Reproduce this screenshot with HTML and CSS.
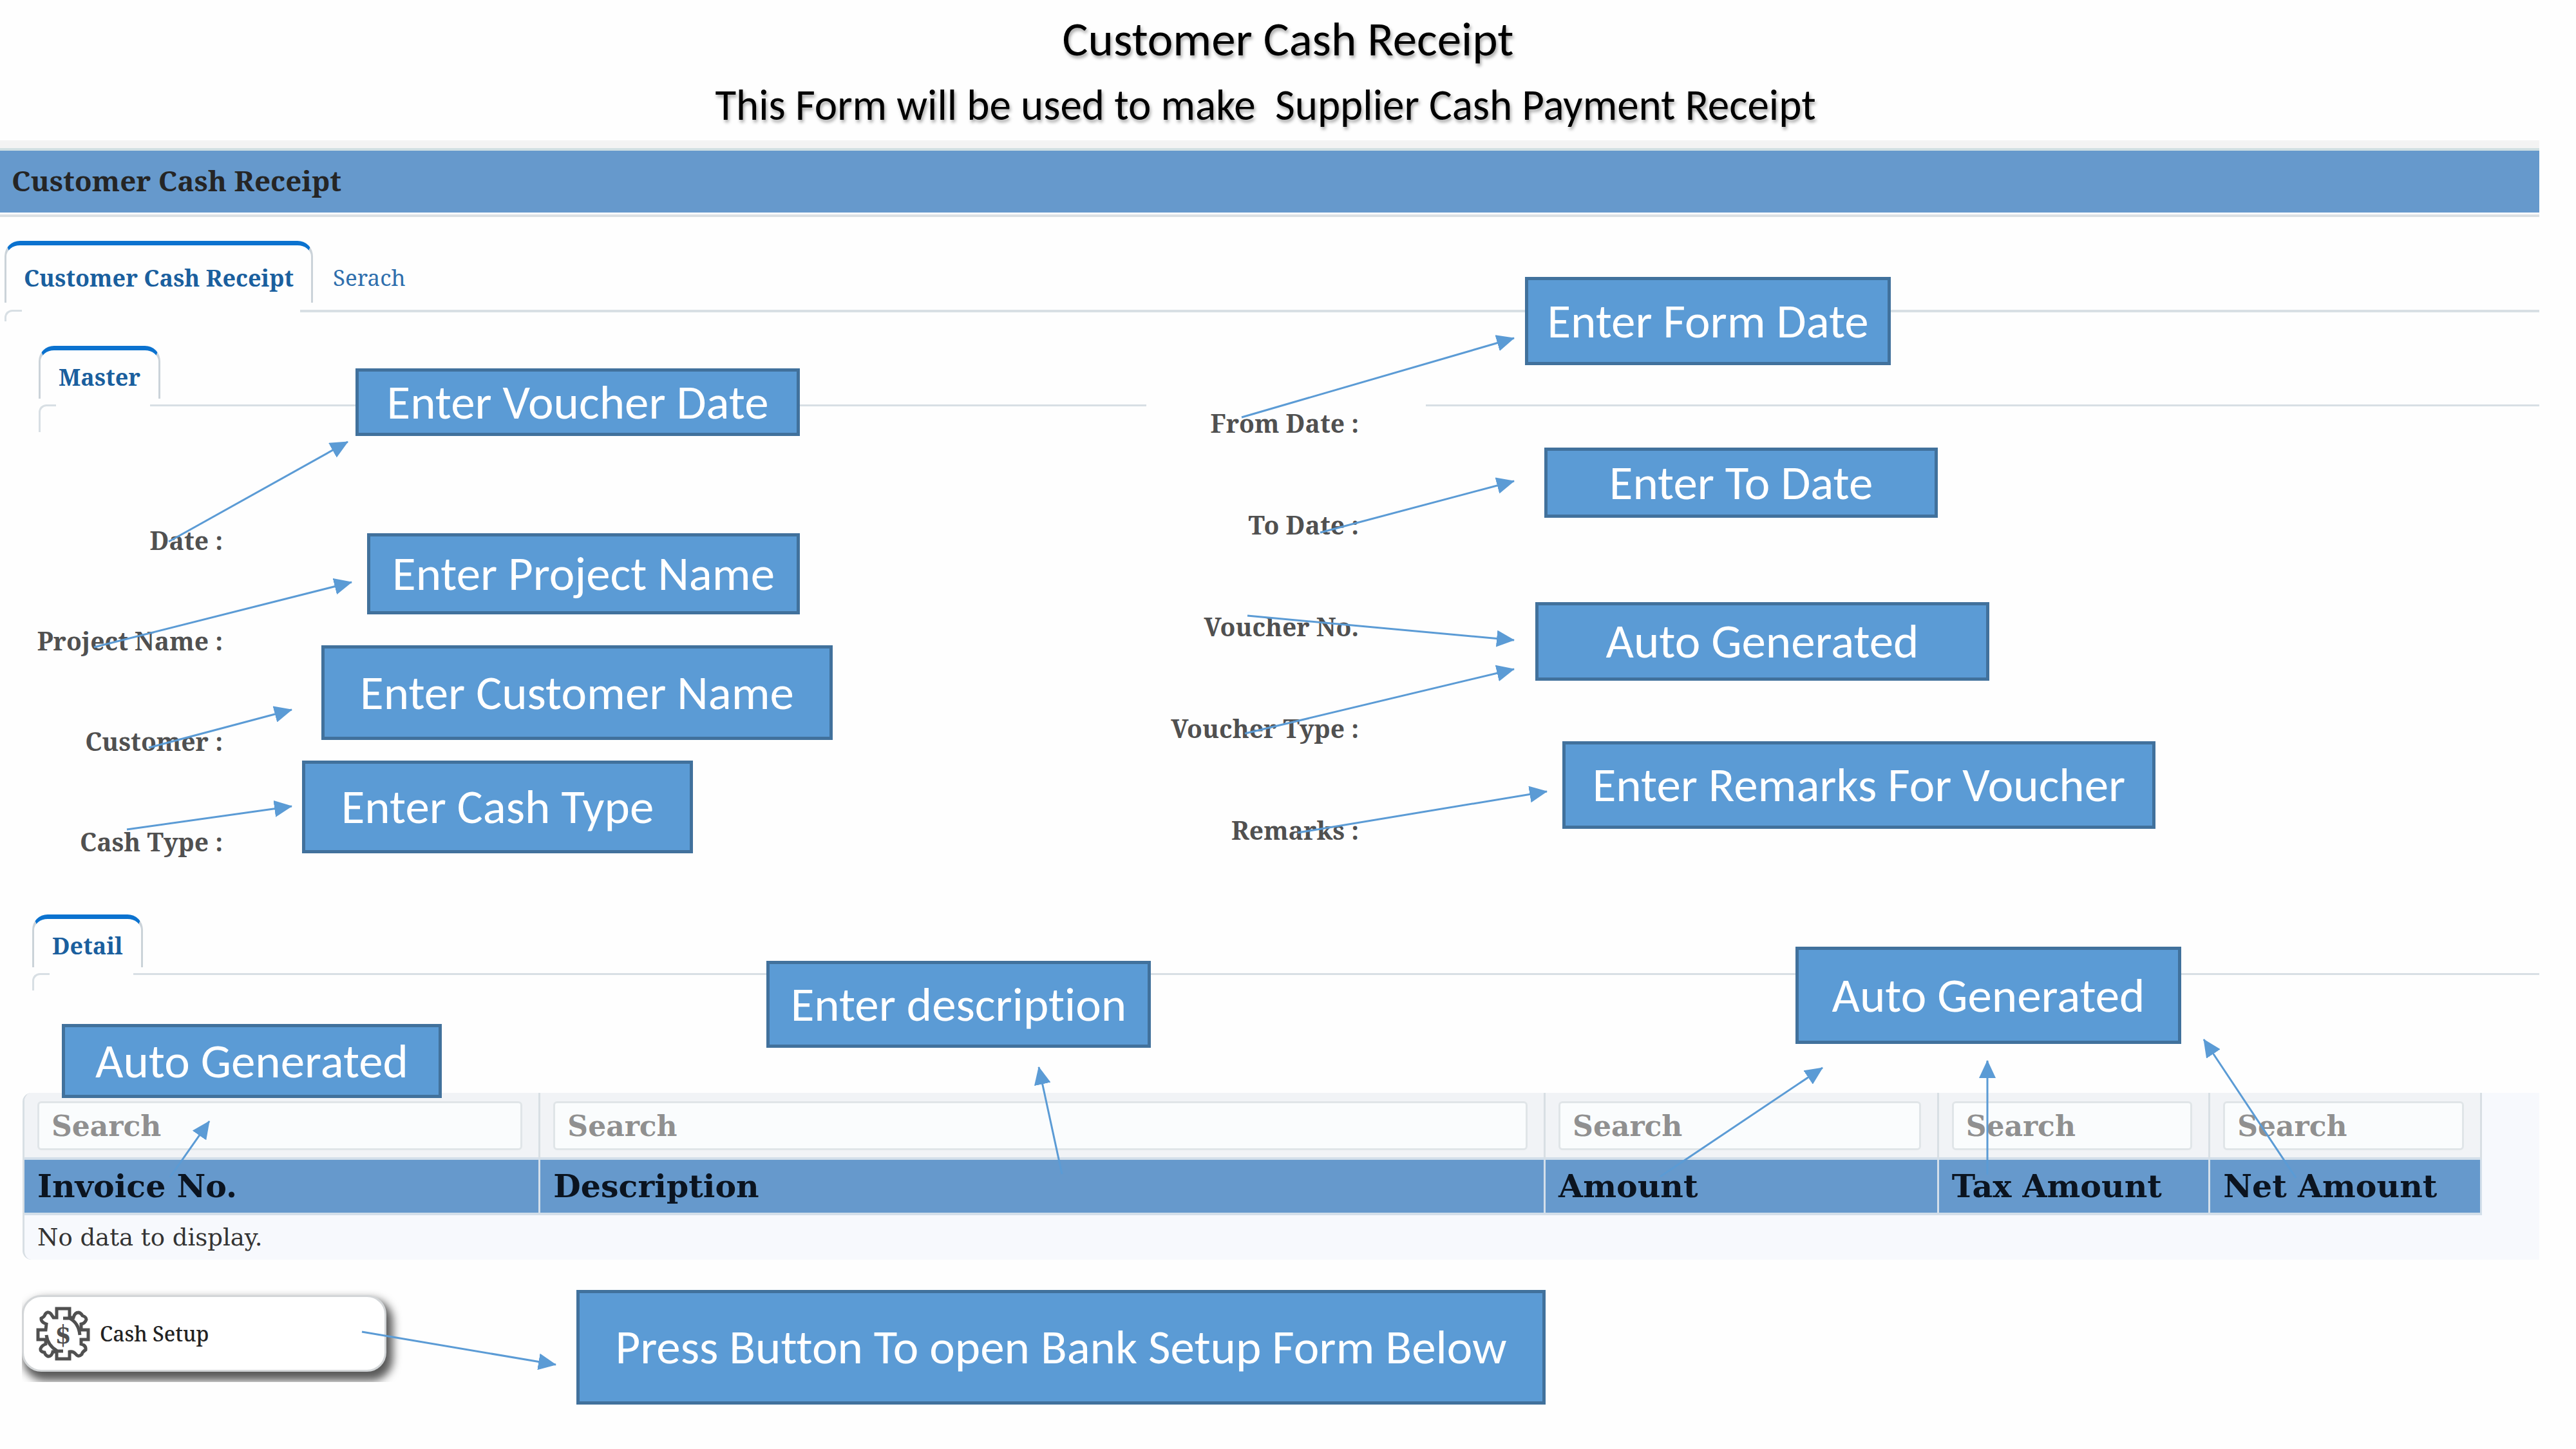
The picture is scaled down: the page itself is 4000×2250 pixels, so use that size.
FILE: index.html
```html
<!DOCTYPE html>
<html lang="en">
<head>
<meta charset="utf-8">
<title>Customer Cash Receipt</title>
<link rel="stylesheet" href="styles.css">
</head>
<body>
<div class="page">
  <header class="intro">
    <h1 class="intro-title">Customer Cash Receipt</h1>
    <p class="intro-text">This Form will be used to make&nbsp; Supplier Cash Payment Receipt</p>
  </header>

  <main class="app">
    <h2 class="app-bar">Customer Cash Receipt</h2>

    <nav class="tabs">
      <button class="tab tab-active" type="button">Customer Cash Receipt</button>
      <button class="tab" type="button">Serach</button>
    </nav>

    <div class="panel panel-main">
      <section>
        <button class="subtab subtab-master" type="button">Master</button>
        <div class="panel panel-master">
          <div class="fields fields-left">
            <span>Date :</span>
            <span>Project Name :</span>
            <span>Customer :</span>
            <span>Cash Type :</span>
          </div>
          <div class="fields fields-right">
            <span>From Date :</span>
            <span>To Date :</span>
            <span>Voucher No.</span>
            <span>Voucher Type :</span>
            <span>Remarks :</span>
          </div>
        </div>
      </section>

      <section>
        <button class="subtab subtab-detail" type="button">Detail</button>
        <div class="panel panel-detail"></div>
        <div class="grid">
          <table class="grid-table">
            <colgroup>
              <col class="col-invoice"><col class="col-description"><col class="col-amount"><col class="col-tax"><col class="col-net">
            </colgroup>
            <thead>
              <tr class="grid-search">
                <td><input type="text" placeholder="Search" aria-label="Search invoice no."></td>
                <td><input type="text" placeholder="Search" aria-label="Search description"></td>
                <td><input type="text" placeholder="Search" aria-label="Search amount"></td>
                <td><input type="text" placeholder="Search" aria-label="Search tax amount"></td>
                <td><input type="text" placeholder="Search" aria-label="Search net amount"></td>
              </tr>
              <tr class="grid-head">
                <th>Invoice No.</th><th>Description</th><th>Amount</th><th>Tax Amount</th><th>Net Amount</th>
              </tr>
            </thead>
            <tbody>
              <tr class="grid-empty"><td colspan="5">No data to display.</td></tr>
            </tbody>
          </table>
        </div>
      </section>
    </div>

    <div class="actions">
      <button class="setup" type="button">
        <svg class="setup-icon" viewBox="0 0 84 84" aria-hidden="true">
          <path d="M32 3H52V17H58Q60 9 66 9Q70 10 72 14Q78 16 78 20Q76 26 70 27V36H81V51H70V58Q78 60 77 67Q72 70 71 74Q66 79 62 74Q58 69 52 70V81H32V70H26Q24 78 18 77Q14 75 13 71Q6 70 7 65Q9 60 15 58V51H3V36H15L16 27Q7 24 8 18Q13 16 14 12Q18 6 23 11L27 17H32Z"/>
          <path d="M42 18H52Q66 25 68 44"/>
          <path d="M16 44Q18 60 33 69H42"/>
          <text x="42" y="57">$</text>
        </svg>
        Cash Setup
      </button>
    </div>
  </main>

  <svg class="arrows" aria-hidden="true">
    <defs>
      <marker id="head" markerUnits="userSpaceOnUse" markerWidth="28" markerHeight="26" refX="27" refY="13" orient="auto">
        <path class="arrow-head" d="M0 0L28 13L0 26Z"/>
      </marker>
    </defs>
    <path d="M262 841L540 686"/>
    <path d="M146 1005L546 904"/>
    <path d="M231 1161L453 1102"/>
    <path d="M197 1288L453 1252"/>
    <path d="M1928 648L2351 525"/>
    <path d="M2050 827L2351 747"/>
    <path d="M1937 956L2351 994"/>
    <path d="M1933 1139L2351 1039"/>
    <path d="M2015 1293L2402 1229"/>
    <path d="M264 1828L325 1741"/>
    <path d="M1649 1823L1613 1657"/>
    <path d="M2578 1827L2830 1658"/>
    <path d="M3086 1824V1647"/>
    <path d="M3565 1829L3422 1614"/>
    <path d="M562 2068L863 2119"/>
  </svg>

  <div class="callout note-voucher-date">Enter Voucher Date</div>
  <div class="callout note-project">Enter Project Name</div>
  <div class="callout note-customer">Enter Customer Name</div>
  <div class="callout note-cash-type">Enter Cash Type</div>
  <div class="callout note-form-date">Enter Form Date</div>
  <div class="callout note-to-date">Enter To Date</div>
  <div class="callout note-voucher">Auto Generated</div>
  <div class="callout note-remarks">Enter Remarks For Voucher</div>
  <div class="callout note-invoice">Auto Generated</div>
  <div class="callout note-description">Enter description</div>
  <div class="callout note-amounts">Auto Generated</div>
  <div class="callout note-setup">Press Button To open Bank Setup Form Below</div>
</div>
</body>
</html>
```
FILE: styles.css
```css
:root {
  --line: #d8dfe4;
  --serif: "Noto Serif", "DejaVu Serif Condensed", serif;
  --wide-serif: "DejaVu Serif", serif;
}

* { box-sizing: border-box; }

body {
  margin: 0;
  background: #fefefe;
  font-family: Calibri, Carlito, Lato, sans-serif;
  font-variant-ligatures: none;
}

button, input { font: inherit; margin: 0; }

.page {
  position: relative;
  min-height: 100vh;
}

/* Heading */
.intro {
  padding: 10px 0 4px;
  text-align: center;
  color: #000;
  text-shadow: 2px 4px 5px rgba(0, 0, 0, 0.35);
}
.intro-title, .intro-text {
  margin: 0;
  font-weight: 400;
  line-height: 102px;
}
.intro-title { font-size: 75px; }
.intro-text { font-size: 67px; padding-right: 70px; }

/* Application window */
.app {
  margin-right: 57px;
  border-top: 12px solid #f3f3f3;
  font-family: var(--serif);
}
.app-bar {
  margin: 0;
  padding: 0 0 4px 18px;
  border-top: 4px solid #d0dfe2;
  background: #6699cc;
  color: #252525;
  font-size: 44px;
  line-height: 92px;
}
.tabs {
  display: flex;
  margin-top: 3px;
  padding: 37px 0 11px 7px;
  border-top: 4px solid #dbe0e3;
}
.tab {
  height: 96px;
  padding: 16px 31px 0;
  border: 0;
  background: none;
  color: #2f6fad;
  font-size: 35px;
}
.tab-active, .subtab {
  border: 3px solid #cbd3d9;
  border-top: 7px solid #0b72cf;
  border-bottom: 0;
  border-radius: 24px 24px 0 0;
  background: #fefefe;
  color: #1a5f9e;
  font-size: 36px;
  font-weight: 700;
}
.tab-active { padding: 12px 27px 0; }
.subtab {
  display: block;
  height: 82px;
  margin-bottom: 9px;
  padding: 8px 28px 0;
}
.subtab-master { margin-left: 60px; }
.subtab-detail { margin-left: 50px; }

/* Panels open with a rule that starts right of the active tab */
.panel {
  position: relative;
  background: linear-gradient(var(--line), var(--line)) no-repeat right top;
}
.panel::before {
  content: "";
  position: absolute;
  left: 0;
  top: 0;
  width: 24px;
  height: var(--stub);
  border-left: 3px solid var(--line);
  border-top: 3px solid var(--line);
  border-top-left-radius: 12px;
}
.panel-main {
  --stub: 15px;
  padding-top: 56px;
  background-size: calc(100% - 466px) 4px;
}
.panel-main::before { left: 7px; }
.panel-master {
  --stub: 40px;
  display: grid;
  grid-template-columns: 286px 1764px;
  margin-left: 60px;
  padding-bottom: 86px;
  background:
    linear-gradient(var(--line), var(--line)) no-repeat 173px 0 / 1547px 3px,
    linear-gradient(var(--line), var(--line)) no-repeat right top / calc(100% - 2154px) 3px;
}
.panel-detail {
  --stub: 24px;
  height: 186px;
  margin-left: 50px;
  background-size: calc(100% - 157px) 3px;
}

.fields {
  display: grid;
  align-content: start;
  justify-content: end;
  justify-items: end;
  color: #505050;
  font-size: 39px;
  font-weight: 700;
  line-height: 54px;
  white-space: nowrap;
}
.fields-left { padding-top: 184px; row-gap: 102px; }
.fields-right { padding-top: 2px; row-gap: 104px; }

/* Invoice grid */
.grid {
  margin-left: 35px;
  padding-right: 89px;
  overflow: hidden;
  border-left: 3px solid var(--line);
  border-radius: 14px 0 0 14px;
  background: #f7f9fd;
  font-family: var(--wide-serif);
}
.grid-table {
  width: 100%;
  table-layout: fixed;
  border-collapse: separate;
  border-spacing: 0;
}
.col-invoice { width: 21%; }
.col-description { width: 40.9%; }
.col-amount { width: 16%; }
.col-tax { width: 11.05%; }
.col-net { width: 11.05%; }

.grid-search td {
  padding: 13px 25px 11px 20px;
  border-right: 3px solid var(--line);
  border-bottom: 4px solid #d3dfea;
  background: #f1f3f6;
}
.grid-search input {
  display: block;
  width: 100%;
  height: 76px;
  padding: 0 19px;
  border: 3px solid #e0e5e8;
  border-radius: 6px;
  background: #fafcfd;
  font-size: 44px;
  font-weight: 700;
}
.grid-search input::placeholder { color: #909090; opacity: 1; }
.grid-head th {
  height: 86px;
  padding: 0 20px;
  border-right: 3px solid #d3dfea;
  border-bottom: 4px solid #d3dfea;
  background: #6699cc;
  color: #0b1420;
  font-size: 49px;
  line-height: 82px;
  text-align: left;
  white-space: nowrap;
}
.grid-empty td {
  height: 69px;
  padding: 0 20px;
  color: #333;
  font-size: 37px;
  line-height: 69px;
}

/* Setup button; its shadow stops at the row's edge */
.actions {
  width: fit-content;
  margin: 40px 0 0 34px;
  padding: 15px 40px 16px 0;
  overflow: hidden;
}
.setup {
  display: flex;
  align-items: center;
  gap: 15px;
  width: 566px;
  height: 119px;
  padding: 0 19px;
  border: 3px solid #d3d6d8;
  border-radius: 30px;
  background: #fff;
  box-shadow: 6px 10px 14px 4px rgba(0, 0, 0, 0.65);
  color: #222;
  font-size: 32px;
  font-weight: 500;
}
.setup-icon {
  width: 84px;
  height: 84px;
  fill: none;
  stroke: #505050;
  stroke-width: 5;
}
.setup-icon text {
  fill: #505050;
  stroke: none;
  font: 700 40px "DejaVu Serif Condensed", serif;
  text-anchor: middle;
}

/* Annotations placed over the form */
.arrows {
  position: absolute;
  inset: 0;
  width: 100%;
  height: 100%;
  pointer-events: none;
  fill: none;
  stroke: #5b9bd5;
  stroke-width: 3;
}
.arrows > path { marker-end: url(#head); }
.arrow-head { fill: #5b9bd5; stroke: none; }

.callout {
  position: absolute;
  display: flex;
  align-items: center;
  justify-content: center;
  border: 5px solid #41719c;
  background: #5b9bd5;
  color: #fff;
  font-size: 75px;
  line-height: 84px;
  white-space: nowrap;
}
.note-voucher-date { left: 552px; top: 572px; width: 690px; height: 105px; }
.note-project { left: 570px; top: 828px; width: 672px; height: 126px; }
.note-customer { left: 499px; top: 1002px; width: 794px; height: 147px; }
.note-cash-type { left: 469px; top: 1181px; width: 607px; height: 144px; }
.note-form-date { left: 2368px; top: 430px; width: 568px; height: 137px; }
.note-to-date { left: 2398px; top: 695px; width: 611px; height: 109px; }
.note-voucher { left: 2384px; top: 935px; width: 705px; height: 122px; }
.note-remarks { left: 2426px; top: 1151px; width: 921px; height: 136px; }
.note-invoice { left: 96px; top: 1590px; width: 590px; height: 115px; }
.note-description { left: 1190px; top: 1492px; width: 597px; height: 135px; }
.note-amounts { left: 2788px; top: 1470px; width: 599px; height: 151px; }
.note-setup { left: 895px; top: 2003px; width: 1505px; height: 178px; }
```
